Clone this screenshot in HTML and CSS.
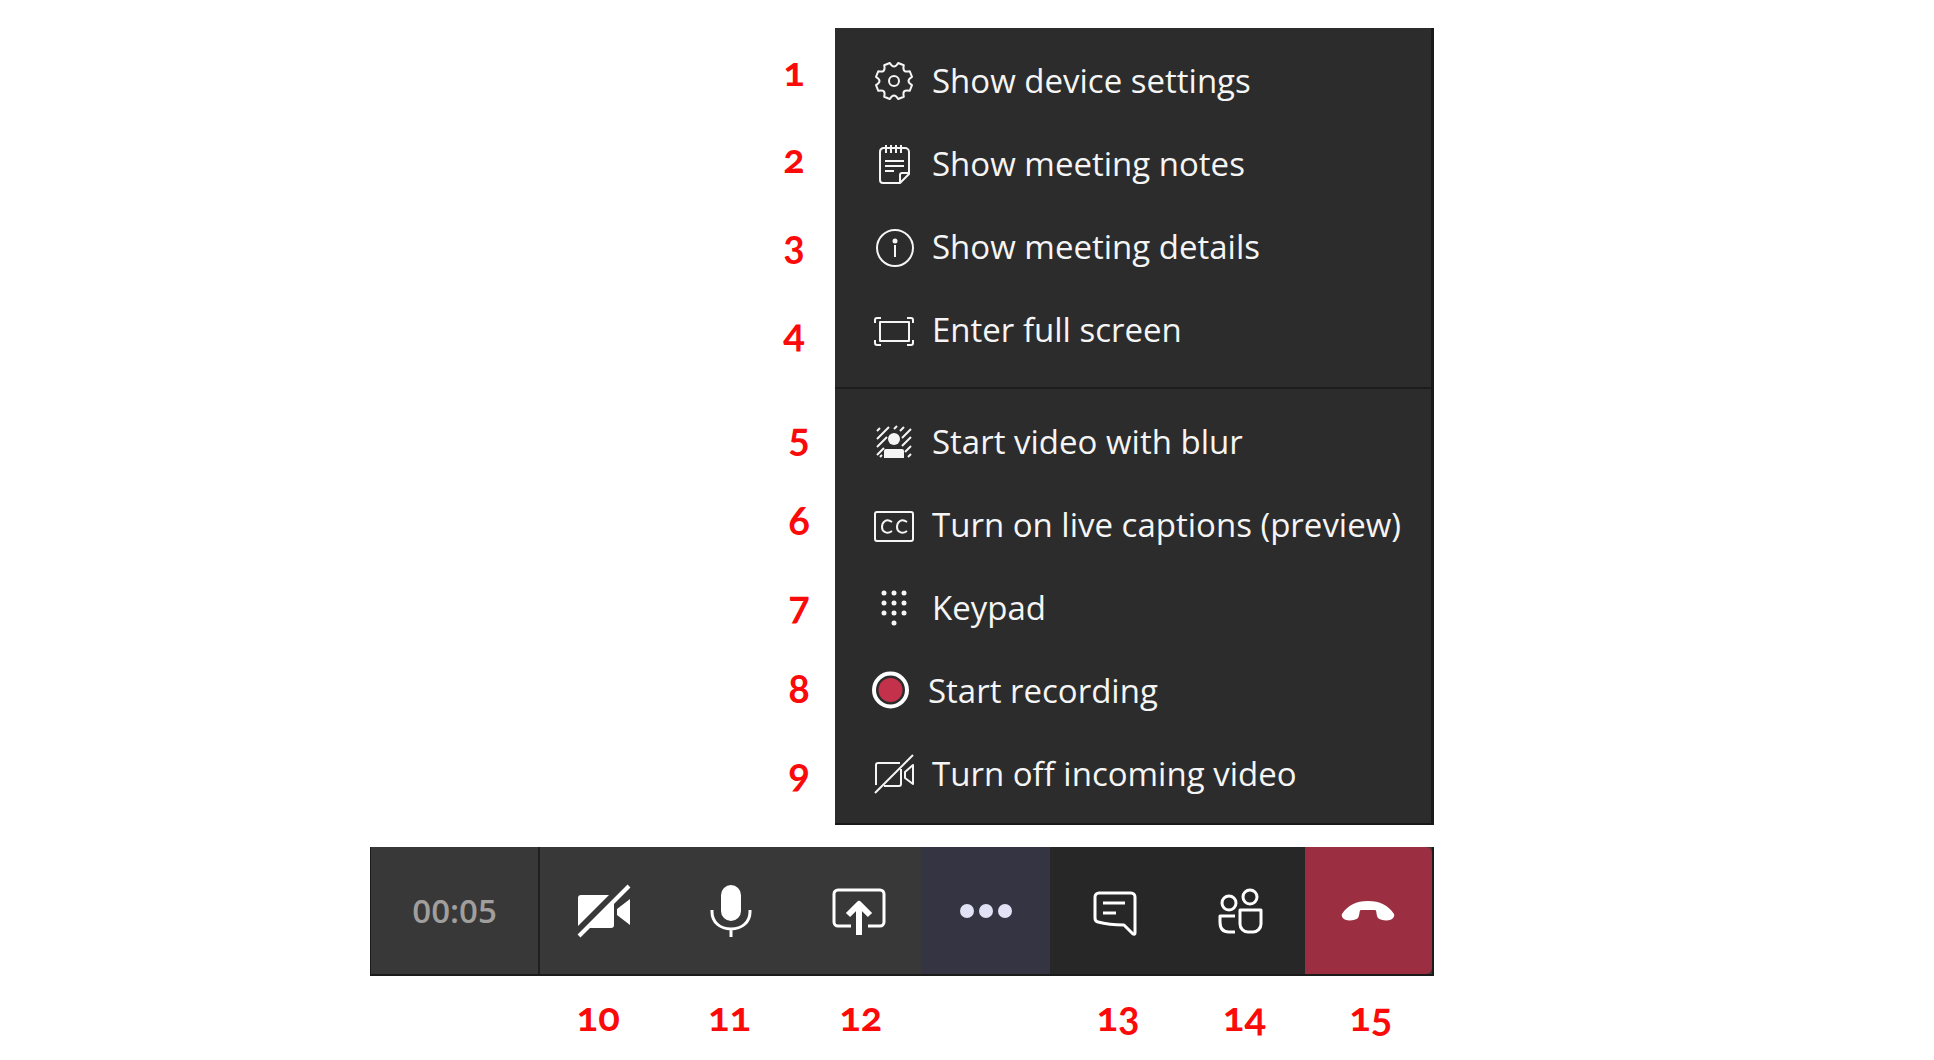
FILE: index.html
```html
<!DOCTYPE html>
<html lang="en">
<head>
    <meta charset="UTF-8">
    <meta name="viewport" content="width=device-width, initial-scale=1.0">
    <title>Meeting controls</title>
    <link rel="stylesheet" href="styles.css">
</head>
<body>
    <main class="guide">
        <div class="menu-area">
            <div class="menu-numbers">
                <div class="number-group">
                    <span>1</span>
                    <span>2</span>
                    <span>3</span>
                    <span>4</span>
                </div>
                <div class="number-group number-group-second">
                    <span>5</span>
                    <span>6</span>
                    <span>7</span>
                    <span>8</span>
                    <span>9</span>
                </div>
            </div>

            <div class="menu">
                <div class="menu-group">
                    <button class="menu-item">
                        <svg class="icon" width="40" height="40" viewBox="-20 -20 40 40">
                            <path d="M-4.2-18Q0-11 4.2-18L9.8-15.7Q7.8-7.8 15.7-9.8L18-4.2Q11 0 18 4.2L15.7 9.8Q7.8 7.8 9.8 15.7L4.2 18Q0 11-4.2 18L-9.8 15.7Q-7.8 7.8-15.7 9.8L-18 4.2Q-11 0-18-4.2L-15.7-9.8Q-7.8-7.8-9.8-15.7Z"/>
                            <circle r="5"/>
                        </svg>
                        Show device settings
                    </button>
                    <button class="menu-item">
                        <svg class="icon" width="40" height="40" viewBox="0 0 40 40">
                            <path d="M9 4h22a4 4 0 0 1 4 4v22l-9 9H9a3 3 0 0 1-3-3V8a4 4 0 0 1 3-4zM35 29h-7a2 2 0 0 0-2 2v8M12 1v8M17 1v8M22 1v8M27 1v8M11 17h19M11 22h19M11 27h9"/>
                        </svg>
                        Show meeting notes
                    </button>
                    <button class="menu-item">
                        <svg class="icon" width="40" height="40" viewBox="0 0 40 40">
                            <circle cx="21" cy="21" r="18"/>
                            <path d="M21 18v12"/>
                            <circle class="solid" cx="21" cy="14" r="2.5"/>
                        </svg>
                        Show meeting details
                    </button>
                    <button class="menu-item">
                        <svg class="icon" width="40" height="40" viewBox="0 0 40 40">
                            <rect x="6" y="12" width="29" height="19"/>
                            <path d="M1 13V10a2 2 0 0 1 2-2h4M33 8h4a2 2 0 0 1 2 2v3M39 30v3a2 2 0 0 1-2 2h-4M7 35H3a2 2 0 0 1-2-2v-3"/>
                        </svg>
                        Enter full screen
                    </button>
                </div>
                <div class="menu-group menu-group-second">
                    <button class="menu-item">
                        <svg class="icon" width="40" height="40" viewBox="0 0 40 40">
                            <path d="M3 9l3-3M3 17L15 5M3 25L13 15M3 33l7-7M20 7l3-3M26 9l4-4M28 16l9-9M28 24l9-9M31 30l6-6M34 35l3-3M6 35l2-2"/>
                            <circle class="solid" cx="20" cy="17" r="6"/>
                            <path class="solid" d="M10 36v-7a2 2 0 0 1 2-2h16a2 2 0 0 1 2 2v7z"/>
                        </svg>
                        Start video with blur
                    </button>
                    <button class="menu-item">
                        <svg class="icon" width="40" height="40" viewBox="0 0 40 40">
                            <rect x="1" y="7" width="38" height="29" rx="2"/>
                            <path d="M18 17q-4-3-7-1-3 2-3 6t3 5q3 2 7-1M33 17q-4-3-7-1-3 2-3 6t3 5q3 2 7-1"/>
                        </svg>
                        Turn on live captions (preview)
                    </button>
                    <button class="menu-item">
                        <svg class="icon" width="40" height="40" viewBox="0 0 40 40">
                            <g class="solid">
                                <circle cx="10" cy="5" r="2.5"/><circle cx="20" cy="5" r="2.5"/><circle cx="30" cy="5" r="2.5"/>
                                <circle cx="10" cy="15" r="2.5"/><circle cx="20" cy="15" r="2.5"/><circle cx="30" cy="15" r="2.5"/>
                                <circle cx="10" cy="25" r="2.5"/><circle cx="20" cy="25" r="2.5"/><circle cx="30" cy="25" r="2.5"/>
                                <circle cx="20" cy="35" r="2.5"/>
                            </g>
                        </svg>
                        Keypad
                    </button>
                    <button class="menu-item">
                        <svg class="icon" width="36" height="40" viewBox="0 0 36 40">
                            <circle class="record-ring" cx="16.5" cy="19" r="16.5"/>
                            <circle class="record-dot" cx="16.5" cy="19" r="12"/>
                        </svg>
                        Start recording
                    </button>
                    <button class="menu-item">
                        <svg class="icon" width="40" height="40" viewBox="0 0 40 40">
                            <path d="M2 31V11a2 2 0 0 1 2-2h22M27 15v15a2 2 0 0 1-2 2H10M39 11v19l-8-6v-6zM1 39L39 1"/>
                        </svg>
                        Turn off incoming video
                    </button>
                </div>
            </div>
        </div>

        <div class="call-bar">
            <div class="timer">00:05</div>
            <button class="call-button" aria-label="Turn camera on">
                <svg class="icon" width="56" height="56" viewBox="0 0 56 56">
                    <path class="solid" d="M5 12h28L2 43V15a3 3 0 0 1 3-3zM38 16v26a3 3 0 0 1-3 3H12zM54 16v26L41 32v-6z"/>
                    <path class="slash" d="M3 53L53 3"/>
                </svg>
            </button>
            <button class="call-button" aria-label="Mute microphone">
                <svg class="icon" width="56" height="56" viewBox="0 0 56 56">
                    <rect class="solid" x="18" y="2" width="20" height="36" rx="10"/>
                    <path class="stand" d="M9 27v2c0 10 8 17 19 17s19-7 19-17v-2M28 46v8"/>
                </svg>
            </button>
            <button class="call-button" aria-label="Share screen">
                <svg class="icon thick" width="56" height="56" viewBox="0 0 56 56">
                    <path d="M20 43H7a4 4 0 0 1-4-4V11a4 4 0 0 1 4-4h42a4 4 0 0 1 4 4v28a4 4 0 0 1-4 4H37"/>
                    <path class="arrow" d="M28 52V22M17 32l11-11 11 11"/>
                </svg>
            </button>
            <button class="call-button more" aria-label="More actions">
                <svg class="icon" width="56" height="56" viewBox="0 0 56 56">
                    <g class="solid"><circle cx="9" cy="28" r="7"/><circle cx="28" cy="28" r="7"/><circle cx="47" cy="28" r="7"/></g>
                </svg>
            </button>
            <button class="call-button side" aria-label="Show conversation">
                <svg class="icon thick" width="56" height="56" viewBox="0 0 56 56">
                    <path d="M14 10h32a4 4 0 0 1 4 4v36q0 2-2 1L39 42Q24 42 13 39a4 4 0 0 1-3-4V14a4 4 0 0 1 4-4z"/>
                    <path d="M18 20h22M18 30h13"/>
                </svg>
            </button>
            <button class="call-button side" aria-label="Show participants">
                <svg class="icon thick" width="56" height="56" viewBox="0 0 56 56">
                    <circle cx="16" cy="20" r="7"/>
                    <circle cx="37" cy="14" r="7"/>
                    <path d="M27 27h21v14a8 8 0 0 1-8 8h-5a8 8 0 0 1-8-8zM22 33H7v6q0 10 9 10h6"/>
                </svg>
            </button>
            <button class="call-button hang-up" aria-label="Hang up">
                <svg class="icon" width="56" height="56" viewBox="0 0 56 56">
                    <path class="solid" d="M2 31C8 22 16 18 28 18s20 4 26 13c1 2-1 5-4 6-4 1-10 0-12-2-2-3-1-8-3-8H21c-2 0-1 5-3 8-2 2-8 3-12 2-3-1-5-4-4-6z"/>
                </svg>
            </button>
        </div>

        <div class="bar-numbers">
            <span class="first">10</span>
            <span>11</span>
            <span>12</span>
            <span class="after-more">13</span>
            <span>14</span>
            <span>15</span>
        </div>
    </main>
</body>
</html>
```
FILE: styles.css
```css
body {
    margin: 0;
    background-color: #fff;
    display: grid;
    grid-template-columns: 370fr 1064fr 500fr;
    font-family: 'Open Sans', 'Segoe UI', sans-serif;
}
.guide {
    grid-column: 2;
    min-width: 0;
    padding-top: 28px;
}
.menu-area {
    display: flex;
    justify-content: flex-end;
    margin-bottom: 22px;
}
.menu-numbers,
.bar-numbers {
    font-family: Lato, Corbel, sans-serif;
    font-size: 40px;
    font-weight: bold;
    font-variant-numeric: oldstyle-nums;
    color: #fb0a0a;
    text-align: center;
}
.menu-numbers {
    width: 82px;
}
.number-group span {
    display: block;
    line-height: 87px;
}
.number-group-second {
    padding: 18px 0 0 10px;
}
.number-group-second span {
    line-height: 84px;
}
.menu {
    box-sizing: border-box;
    flex: 0 0 599px;
    background-color: #2c2c2c;
    border-right: 3px solid #191919;
    border-bottom: 2px solid #191919;
}
.menu-group {
    padding: 11px 0 16px;
}
.menu-group-second {
    padding: 11px 0 8px;
    border-top: 2px solid #1c1c1c;
}
.menu-item {
    display: flex;
    align-items: center;
    gap: 18px;
    width: 100%;
    height: 83px;
    padding: 0 0 0 39px;
    border: none;
    background: none;
    color: #f5f5f5;
    font-family: inherit;
    font-size: 33px;
    text-align: left;
    white-space: nowrap;
    cursor: pointer;
}
.icon {
    flex: none;
    overflow: visible;
    fill: none;
    stroke: currentColor;
    stroke-width: 2;
    stroke-linejoin: round;
}
.thick {
    stroke-width: 3;
}
.solid {
    fill: currentColor;
    stroke: none;
}
.record-ring {
    stroke: #fff;
    stroke-width: 4;
}
.record-dot {
    fill: #c4314b;
    stroke: none;
}
.call-bar {
    display: grid;
    grid-template-columns: 170fr repeat(7, 128fr);
    height: 129px;
    box-sizing: border-box;
    background-color: #383838;
    border: 1px solid #1b1b1b;
    border-width: 0 2px 2px 1px;
}
.timer {
    display: flex;
    align-items: center;
    justify-content: center;
    border-right: 2px solid #1f1f1f;
    color: #a19f9d;
    font-size: 33px;
    font-weight: 600;
}
.call-button {
    display: flex;
    align-items: center;
    justify-content: center;
    padding: 0;
    border: none;
    background: none;
    color: #fff;
    cursor: pointer;
}
.slash {
    stroke-width: 4;
}
.stand {
    stroke-width: 3;
}
.arrow {
    stroke-width: 6;
}
.more {
    background-color: #343442;
    color: #e2e2f6;
}
.side {
    background-color: #272727;
}
.hang-up {
    background-color: #9c2e41;
    border-radius: 0 6px 6px 0;
}
.bar-numbers {
    display: grid;
    grid-template-columns: 162fr repeat(3, 131fr) 128fr repeat(3, 126fr);
    padding-top: 10px;
    line-height: 60px;
}
.first {
    grid-column: 2;
}
.after-more {
    grid-column: 6;
}
```
